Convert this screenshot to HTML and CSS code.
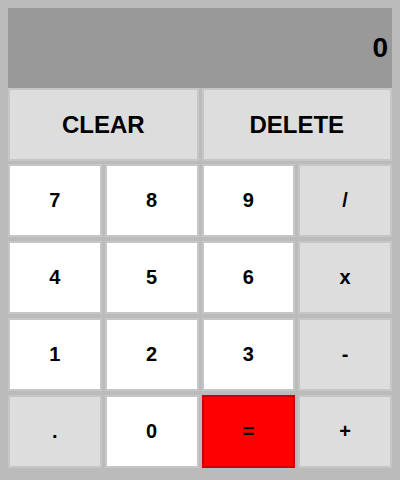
FILE: index.html
```html
<!DOCTYPE html>
<html>
<head>
<meta charset="utf-8">
<link rel="stylesheet" href="styles.css">
</head>
<body>
<div class="calc">
  <div class="display">0</div>
  <div class="top-row">
    <div class="key gray wide">CLEAR</div>
    <div class="key gray wide">DELETE</div>
  </div>
  <div class="keypad">
    <div class="key">7</div>
    <div class="key">8</div>
    <div class="key">9</div>
    <div class="key gray">/</div>
    <div class="key">4</div>
    <div class="key">5</div>
    <div class="key">6</div>
    <div class="key gray">x</div>
    <div class="key">1</div>
    <div class="key">2</div>
    <div class="key">3</div>
    <div class="key gray">-</div>
    <div class="key gray">.</div>
    <div class="key">0</div>
    <div class="key red">=</div>
    <div class="key gray">+</div>
  </div>
</div>
</body>
</html>
```

FILE: styles.css
```css
html, body {
  margin: 0;
  padding: 0;
}
body {
  background: #bbbbbb;
  font-family: "Liberation Sans", Arial, sans-serif;
  padding: 8px;
  width: 400px;
  height: 480px;
  box-sizing: border-box;
}
.calc {
  width: 384px;
}
.display {
  height: 80px;
  background: #999999;
  color: #000;
  font-weight: bold;
  font-size: 28px;
  display: flex;
  align-items: center;
  justify-content: flex-end;
  padding-right: 4px;
  box-sizing: border-box;
}
.top-row {
  display: grid;
  grid-template-columns: 1fr 1fr;
  column-gap: 3px;
  margin-bottom: 3px;
}
.keypad {
  display: grid;
  grid-template-columns: repeat(4, 1fr);
  column-gap: 3px;
  row-gap: 4px;
}
.key {
  height: 73px;
  box-sizing: border-box;
  border: 2px solid #c6c6c6;
  background: #ffffff;
  color: #000;
  font-weight: bold;
  font-size: 20px;
  display: flex;
  align-items: center;
  justify-content: center;
}
.key.wide {
  font-size: 24px;
}
.key.gray {
  background: #dddddd;
}
.key.red {
  background: #ff0000;
  border-color: #cc0000;
}
```
